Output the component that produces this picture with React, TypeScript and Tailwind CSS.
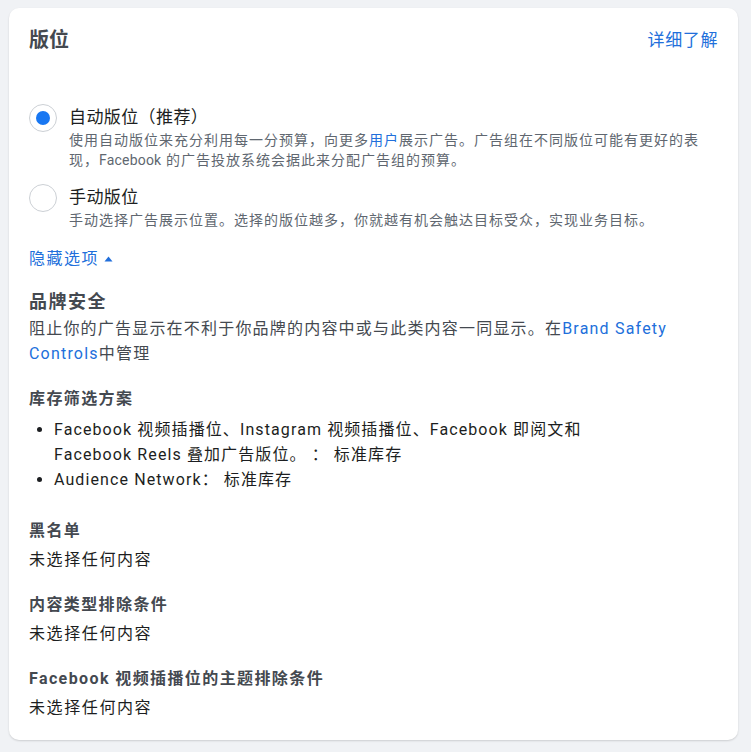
import { useState } from 'react';

const FONT = { fontFamily: "Roboto, 'Noto Sans CJK SC', sans-serif" };

interface Option {
  id: string;
  label: string;
}

const Radio = ({ checked }: { checked: boolean }) => (
  <span className="flex h-[28px] w-[28px] shrink-0 items-center justify-center rounded-full border border-[#ccd0d5] bg-white">
    {checked && <span className="h-[14px] w-[14px] rounded-full bg-[#1877f2]" />}
  </span>
);

const Section = ({ title, value, first }: { title: string; value: string; first?: boolean }) => (
  <div className={first ? 'mt-[28px]' : 'mt-[23px]'}>
    <div className="text-[16px] leading-[22px] font-bold tracking-[1.4px] text-[#444950]">{title}</div>
    <div className="mt-[7px] text-[16px] leading-[22px] tracking-[1.6px] text-[#1c1e21]">{value}</div>
  </div>
);

export default function App() {
  const [placement, setPlacement] = useState<string>('auto');
  const [showOptions, setShowOptions] = useState(true);

  const options: Option[] = [
    { id: 'auto', label: '自动版位（推荐）' },
    { id: 'manual', label: '手动版位' },
  ];

  return (
    <div className="min-h-[752px] bg-[#f0f2f5] pt-2" style={FONT}>
      <div className="ml-[9px] w-[729px] rounded-[10px] bg-white px-5 pt-5 pb-[21px] shadow-[0_1px_2px_rgba(0,0,0,0.15)]">
        {/* Header */}
        <div className="flex h-[24px] items-center justify-between">
          <h2 className="text-[20px] leading-[24px] font-bold text-[#444950]">版位</h2>
          <a href="#" className="text-[17px] leading-[24px] tracking-[0.6px] text-[#216fdb]">
            详细了解
          </a>
        </div>

        {/* Placement options */}
        <div className="mt-[52px]">
          {options.map((opt, i) => (
            <div
              key={opt.id}
              className={`flex gap-[12px] cursor-pointer ${i > 0 ? 'mt-[14px]' : ''}`}
              onClick={() => setPlacement(opt.id)}
            >
              <Radio checked={placement === opt.id} />
              <div className="flex-1">
                <div className="text-[17px] leading-[26px] tracking-[0.4px] text-[#1c1e21]">{opt.label}</div>
                {opt.id === 'auto' ? (
                  <p className="text-[14px] leading-[20px] tracking-[1px] text-[#606770]">
                    使用自动版位来充分利用每一分预算，向更多<span className="text-[#216fdb]">用户</span>
                    展示广告。广告组在不同版位可能有更好的表现，<span className="tracking-[0.2px]">Facebook</span> 的广告投放系统会据此来分配广告组的预算。
                  </p>
                ) : (
                  <p className="text-[14px] leading-[20px] tracking-[1px] text-[#606770]">
                    手动选择广告展示位置。选择的版位越多，你就越有机会触达目标受众，实现业务目标。
                  </p>
                )}
              </div>
            </div>
          ))}
        </div>

        {/* Toggle */}
        <button
          className="mt-[19px] flex items-center gap-[5px] text-[16px] leading-[20px] tracking-[1.5px] text-[#216fdb]"
          onClick={() => setShowOptions(!showOptions)}
        >
          隐藏选项
          <svg width="9" height="6" viewBox="0 0 9 6" className={showOptions ? '' : 'rotate-180'}>
            <path d="M4.5 0.5L8.5 5.5H0.5Z" fill="#216fdb" />
          </svg>
        </button>

        {showOptions && (
          <div>
            {/* Brand safety */}
            <div className="mt-[21px] text-[18px] leading-[24px] font-bold tracking-[1.5px] text-[#444950]">品牌安全</div>
            <p className="mt-[2px] text-[16px] leading-[25px] tracking-[1.2px] text-[#444950]">
              阻止你的广告显示在不利于你品牌的内容中或与此类内容一同显示。在
              <a href="#" className="text-[#216fdb]">Brand Safety Controls</a>中管理
            </p>

            {/* Inventory filter */}
            <div className="mt-[22px] text-[16px] leading-[22px] font-bold tracking-[1.4px] text-[#444950]">库存筛选方案</div>
            <ul className="mt-[7px] list-disc pl-[25px] text-[16px] leading-[25px] tracking-[1.1px] text-[#1c1e21]">
              <li>
                Facebook 视频插播位、Instagram 视频插播位、Facebook 即阅文和
                <br />
                Facebook Reels 叠加广告版位。 ： 标准库存
              </li>
              <li>Audience Network： 标准库存</li>
            </ul>

            <Section first title="黑名单" value="未选择任何内容" />
            <Section title="内容类型排除条件" value="未选择任何内容" />
            <Section title="Facebook 视频插播位的主题排除条件" value="未选择任何内容" />
          </div>
        )}
      </div>
    </div>
  );
}
